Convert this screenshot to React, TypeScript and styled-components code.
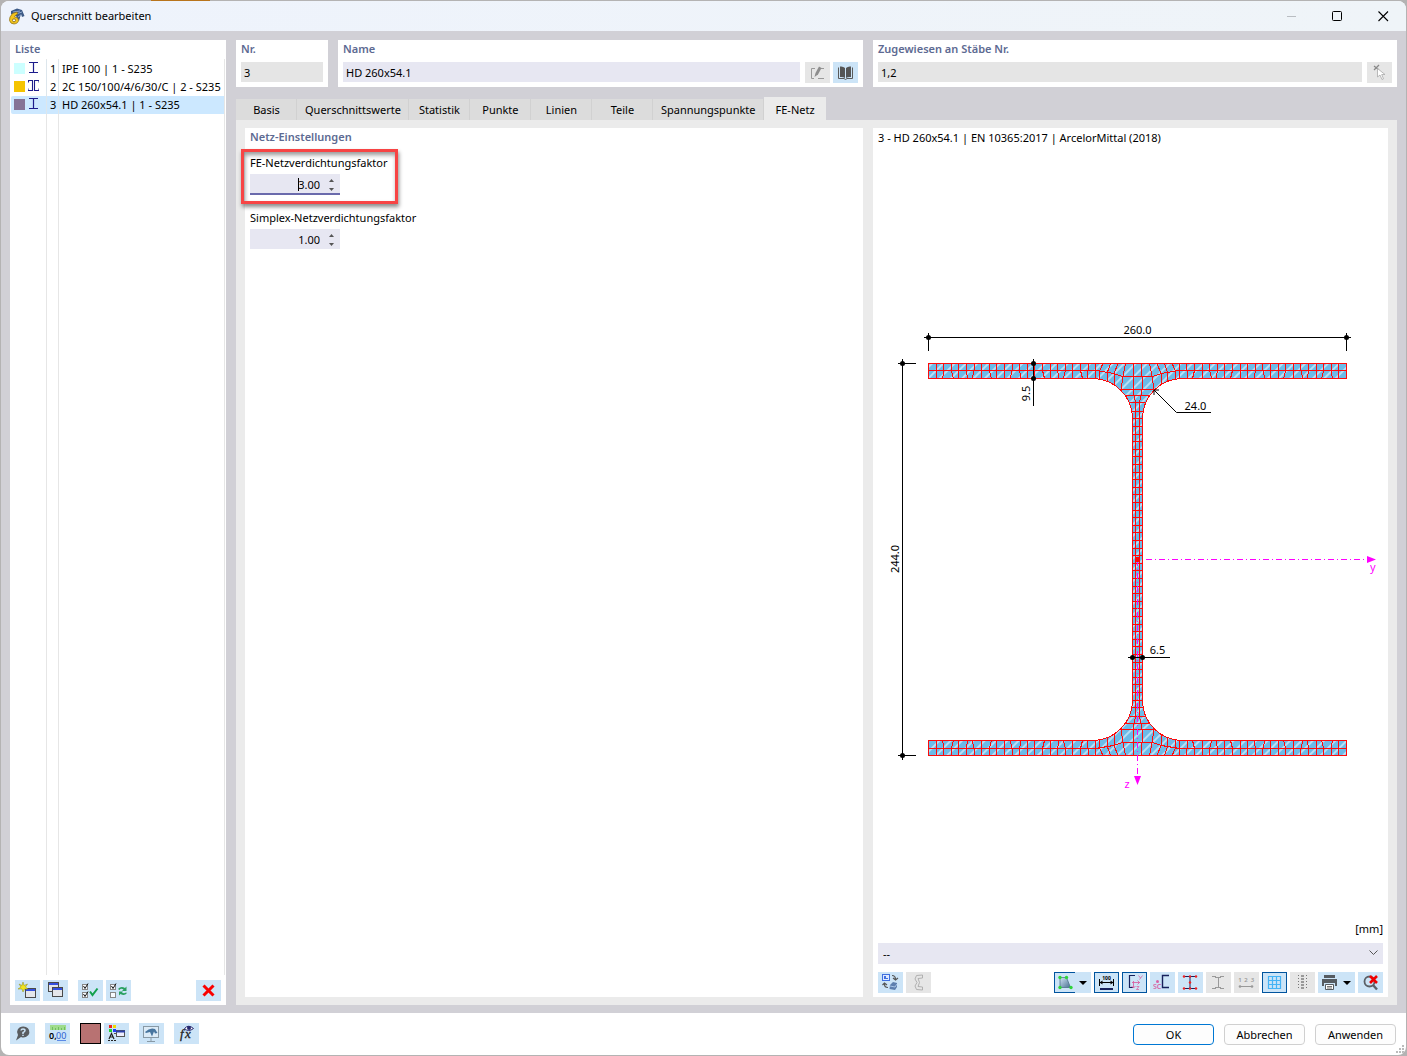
import React, { useState } from "react";
import styled, { createGlobalStyle, css } from "styled-components";

const color = {
  body: "#d1d0d6",
  page: "#ebebeb",
  field: "#e7e7f2",
  readOnly: "#e5e5e5",
  button: "#cce4f7",
  heading: "#5d6a92",
  accent: "#00549e",
  navy: "#17215c",
};

const GlobalStyle = createGlobalStyle`
  * { box-sizing: border-box; }
  body {
    margin: 0;
    background: #b4b3b3;
    font: 11px/16px "Noto Sans", "Open Sans", sans-serif;
    color: #000;
  }
  button, input, select { font: inherit; color: inherit; margin: 0; border-radius: 0; }
  h2 { margin: 0; font-size: 11px; line-height: 16px; font-weight: 600; color: ${color.heading}; }
  svg { display: block; }
`;

const Desktop = styled.div`
  min-height: 100vh;
  padding: 1px;
  display: flex;
  background: linear-gradient(90deg, transparent 151px, #b8741c 151px, #b8741c 210px, transparent 210px) top / 100% 1px no-repeat;
`;
const Dialog = styled.div`
  flex: 1;
  min-width: 0;
  display: flex;
  flex-direction: column;
  border-radius: 8px;
  overflow: hidden;
  background: #fff;
`;
const TitleBar = styled.header`
  height: 30px;
  display: flex;
  align-items: center;
  gap: 6px;
  padding-left: 7px;
  background: linear-gradient(90deg, #eef3fc, #eff4f8);
`;
const WindowButtons = styled.div`
  margin-left: auto;
  display: flex;
`;
const WindowButton = styled.button`
  width: 46px;
  height: 28px;
  padding: 0;
  border: 0;
  background: none;
  display: grid;
  place-items: center;
  color: ${(p) => (p.disabled ? "#b9bdc2" : "#000")};
`;
const Body = styled.main`
  flex: 1;
  display: flex;
  gap: 10px;
  padding: 9px 9px 8px;
  background: ${color.body};
`;
const Panel = styled.section`
  min-width: 0;
  background: #fff;
`;

/* ---- section list ---- */
const ListPanel = styled(Panel)`
  width: 216px;
  flex: none;
  display: flex;
  flex-direction: column;
  padding: 1px 1px 4px;
  h2 { padding-left: 4px; }
`;
const List = styled.ul`
  flex: 1;
  margin: 2px 0 0;
  padding: 1px 0 0;
  list-style: none;
  border-right: 1px solid #e6e6e6;
  background:
    linear-gradient(#e6e6e6, #e6e6e6) 35px 0 / 1px 100% no-repeat,
    linear-gradient(#e6e6e6, #e6e6e6) 47px 0 / 1px 100% no-repeat;
`;
const ListRow = styled.button<{ $selected?: boolean }>`
  width: 100%;
  height: 18px;
  padding: 0 0 0 3px;
  border: 0;
  border-radius: 2px 0 0 2px;
  display: flex;
  align-items: center;
  text-align: left;
  white-space: nowrap;
  background: ${(p) => (p.$selected ? "#cce8ff" : "transparent")};
  svg { margin-bottom: 2px; }
`;
const Swatch = styled.span<{ $c: string }>`
  width: 11px;
  height: 11px;
  margin: 0 3px 2px 0;
  background: ${(p) => p.$c};
`;
const RowNumber = styled.span`
  width: 13px;
  margin: 0 3px 0 7px;
  height: 18px;
  line-height: 18px;
  padding-left: 3px;
  border-left: 1px solid #dde6ec;
  border-right: 1px solid #dde6ec;
`;
const ListTools = styled.div`
  display: flex;
  gap: 3px;
  padding: 5px 4px 0;
`;

/* ---- shared buttons ---- */
const Tool = styled.button<{ $wide?: boolean; $gapBefore?: boolean; $push?: boolean }>`
  flex: none;
  width: ${(p) => (p.$wide ? 37 : 25)}px;
  height: 21px;
  padding: 0;
  border: 0;
  display: flex;
  align-items: center;
  justify-content: ${(p) => (p.$wide ? "flex-start" : "center")};
  background: ${(p) => (p.disabled ? "#e6e6e6" : color.button)};
  ${(p) => p.$gapBefore && "margin-left: 7px;"}
  ${(p) => p.$push && "margin-left: auto;"}
  ${(p) => p["aria-pressed"] && !p.$wide && css`box-shadow: inset 0 0 0 1px ${color.accent};`}
`;
const SplitPart = styled.span<{ $on?: boolean }>`
  width: 21px;
  height: 21px;
  display: grid;
  place-items: center;
  border: 1px solid ${(p) => (p.$on ? color.accent : "transparent")};
  border-right: 0;
`;
const Caret = styled.span`
  margin-left: 4px;
  border: 4px solid transparent;
  border-top: 4px solid #000;
  border-bottom: 0;
`;

/* ---- right-hand area ---- */
const Main = styled.div`
  flex: 1;
  min-width: 0;
  display: flex;
  flex-direction: column;
`;
const HeaderGrid = styled.div`
  display: grid;
  grid-template-columns: 92px minmax(0, 525fr) minmax(0, 524fr);
  gap: 10px;
  margin-bottom: 10px;
`;
const HeaderPanel = styled(Panel)`
  height: 47px;
  padding: 1px 5px 4px;
`;
const FieldRow = styled.div`
  display: flex;
  gap: 5px;
  margin-top: 5px;
`;
const TextBox = styled.input`
  flex: 1;
  min-width: 0;
  height: 20px;
  padding: 0 3px;
  border: 0;
  outline: 0;
  background: ${(p) => (p.readOnly ? color.readOnly : color.field)};
`;
const PairedTool = styled(Tool)`
  & + & { margin-left: -2px; }
`;
const Tabs = styled.div`
  display: flex;
  align-items: flex-end;
  height: 23px;
`;
const Tab = styled.button`
  min-width: 61px;
  height: 21px;
  padding: 0 7px 0 8px;
  border: 0;
  border-right: 1px solid #d1d1d1;
  background: #dcdcdc;
  white-space: nowrap;
  &[aria-selected="true"] {
    height: 23px;
    border-right: 0;
    padding: 3px 11px 0 12px;
    background: ${color.page};
  }
`;
const TabPage = styled.div`
  flex: 1;
  display: grid;
  grid-template-columns: minmax(0, 618fr) minmax(0, 515fr);
  gap: 10px;
  padding: 8px 9px;
  background: ${color.page};
`;
const SettingsPanel = styled(Panel)`
  padding: 1px 5px;
`;
const Setting = styled.div`
  position: relative;
  height: 55px;
  padding-top: 10px;
  label { display: block; line-height: 16px; }
`;
const SpinBox = styled.div<{ $focused?: boolean }>`
  position: relative;
  display: flex;
  width: 90px;
  height: 21px;
  margin-top: 3px;
  background: ${color.field};
  box-shadow: inset 0 ${(p) => (p.$focused ? "-2px #6a6aac" : "-1px #fff")};
  input {
    width: 72px;
    padding: 0 2px 0 0;
    border: 0;
    outline: 0;
    background: none;
    text-align: right;
  }
`;
const TextCursor = styled.span`
  position: absolute;
  left: 48px;
  top: 4px;
  width: 1px;
  height: 13px;
  background: #000;
`;
const Steppers = styled.div`
  width: 18px;
  display: flex;
  flex-direction: column;
  align-items: center;
  justify-content: center;
  gap: 1px;
  button {
    width: 12px;
    height: 8px;
    padding: 0;
    border: 0;
    background: none;
    display: grid;
    place-items: center;
  }
`;
const Highlight = styled.div`
  position: absolute;
  left: -9px;
  top: 4px;
  width: 157px;
  height: 55px;
  border: 3px solid #f74444;
  box-shadow: 1px 3px 4px rgba(0, 0, 0, 0.45), inset 1px 3px 4px rgba(0, 0, 0, 0.4);
  pointer-events: none;
`;
const PreviewPanel = styled(Panel)`
  display: flex;
  flex-direction: column;
  padding: 2px 5px 4px;
`;
const Drawing = styled.div`
  flex: 1;
  min-height: 300px;
  svg { width: 100%; height: 100%; }
`;
const Unit = styled.div`
  text-align: right;
`;
const SelectWrap = styled.div`
  position: relative;
  margin: 6px 0 8px;
  select {
    display: block;
    width: 100%;
    height: 21px;
    padding: 0 20px 0 5px;
    border: 0;
    appearance: none;
    background: ${color.field};
  }
  svg {
    position: absolute;
    right: 5px;
    top: 5px;
    pointer-events: none;
  }
`;
const ToolRow = styled.div`
  display: flex;
  gap: 3px;
`;

/* ---- footer ---- */
const Footer = styled.footer`
  position: relative;
  height: 42px;
  display: flex;
  align-items: flex-start;
  gap: 10px;
  padding: 10px 10px 0 9px;
`;
const ColorButton = styled.button`
  width: 21px;
  height: 21px;
  margin-right: -7px;
  padding: 0;
  border: 1px solid #000;
  background: #b87272;
`;
const DialogButton = styled.button<{ $primary?: boolean }>`
  width: 81px;
  height: 21px;
  margin-top: 1px;
  padding: 0;
  border: 1px solid ${(p) => (p.$primary ? "#0078d4" : "#d0d0d0")};
  border-radius: 4px;
  background: #fdfdfd;
  ${(p) => p.$primary && "margin-left: auto;"}
`;
const Grip = styled.svg`
  position: absolute;
  right: 1px;
  bottom: 1px;
`;

/* ---- icons ---- */
type IconProps = { w?: number; h?: number; children: React.ReactNode };
const Icon = ({ w = 19, h = 17, children }: IconProps) => (
  <svg width={w} height={h} viewBox={`0 0 ${w} ${h}`} fill="none" aria-hidden="true">
    {children}
  </svg>
);

const AppIcon = () => (
  <Icon w={17} h={17}>
    <path d="M3 3 L9 0.500 L14 2 L16.500 8 L14 9 L13 6 L11 13 L8 8 L3 6Z" fill="#3c5a86" />
    <path d="M5 4 L12 3 M8 6 L14 4 M10 9 L13 7" stroke="#8fa9cc" />
    <path d="M9 4 L4.500 5.500 Q1 9 1.500 12.500 Q2.500 16 6 16 Q10.500 15.500 10.500 12 Q10 9 6.500 9 Q7 7 9.500 6Z" fill="#f3c51c" stroke="#8a6c16" strokeWidth=".7" />
    <circle cx="6" cy="12.300" r="1.500" fill="#fff" stroke="#7b6112" strokeWidth=".8" />
  </Icon>
);
const IShape = () => (
  <Icon w={11} h={12}>
    <path d="M1 0.500 H10 M1 10.500 H10 M5.500 0.500 V10.500" stroke="#1c1c8c" strokeWidth="1.200" />
  </Icon>
);
const DoubleC = () => (
  <Icon w={11} h={12}>
    <path d="M0 0.500 H4.500 V10.500 H0 V8.500 M0.500 0.500 V2.500 M11 2.500 V0.500 H6.500 V10.500 H11 V8.500" stroke="#1c1c8c" strokeWidth="1.100" />
  </Icon>
);
const windowShape = (x: number, y: number) => (
  <g key={`${x}${y}`}>
    <rect x={x + 0.5} y={y + 0.5} width="10" height="9" fill="#e4e6ea" stroke="#4a4a4a" />
    <path d={`M${x + 1} ${y + 2} h9`} stroke="#3450e0" strokeWidth="2" />
    <path d={`M${x} ${y + 0.5} h11`} stroke="#4a4a4a" />
  </g>
);
const NewIcon = () => (
  <Icon>
    {windowShape(7, 6)}
    <path d="M5 0 L6 3.500 L9.500 2 L7.500 5 L10 7 L6.500 7 L5 10 L4 7 L0 7 L3 5 L1 2 L4 3.500Z" fill="#f2e31c" stroke="#8b8a1a" strokeWidth=".5" />
  </Icon>
);
const CopyIcon = () => <Icon>{windowShape(2, 0)}{windowShape(6, 5)}</Icon>;
const checkBox = (y: number, on: boolean) => (
  <>
    <rect x="1.500" y={y + 0.5} width="5" height="5" stroke="#888" fill="#f8fbff" />
    {on && <path d={`M2.500 ${y + 2} l1.500 2.500 l3 -5`} stroke="#111" />}
  </>
);
const CheckAll = () => (
  <Icon>
    {checkBox(2, true)}{checkBox(10, true)}
    <path d="M9 9.500 L11.500 13 L16.500 6.500" stroke="#12a04c" strokeWidth="2" />
  </Icon>
);
const CheckSwap = () => (
  <Icon>
    {checkBox(2, true)}{checkBox(10, false)}
    <path d="M9 7 Q12 3.500 16 6 L17.500 4.500 V9 H13 L14.500 7.500 Q12 6 10.500 8Z M18 11 Q15.500 14.500 11.500 12 L10 13.500 V9.500 H14 L13 10.500 Q15 12 17 10.500Z" fill="#2ba060" />
  </Icon>
);
const Cross = () => (
  <Icon w={13} h={13}>
    <path d="M1.500 1.500 L11.500 11.500 M11.500 1.500 L1.500 11.500" stroke="#fa0000" strokeWidth="3" />
  </Icon>
);
const EditIcon = () => (
  <Icon w={15} h={15}>
    <path d="M5 3.500 H1.500 V13.500 H4 M8 13.500 H14 M11 3.500 H14" stroke="#999" />
    <path d="M4.500 12 L5.500 8 L9 1.500 L11.500 3 L8 9.500Z" fill="#8d8d8d" />
  </Icon>
);
const BookIcon = () => (
  <Icon w={15} h={14}>
    <path d="M0.500 1.500 V12.500 H6 L7.500 13.500 L9 12.500 H14.500 V1.500" stroke="#5a5a5a" />
    <path d="M2 0.500 Q5 0 7 2 V12 Q5 10.500 2 11Z M13 0.500 Q10 0 8 2 V12 Q10 10.500 13 11Z" fill="#555" />
  </Icon>
);
const PickIcon = () => (
  <Icon w={15} h={17}>
    <path d="M2 2 L7 6 M7 1 L2 6" stroke="#888" strokeWidth="1.200" />
    <path d="M5.500 4.500 V13 L8 11 L10 15.500 L11.500 14.800 L9.700 10.500 H13Z" fill="#fff" stroke="#aaa" strokeWidth=".8" />
  </Icon>
);
const HelpIcon = () => (
  <Icon w={17} h={17}>
    <path d="M9 1.500 A6 5.500 0 1 1 7 12 L2 15.500 L4 10 A6 5.500 0 0 1 9 1.500Z" fill="#5a5d60" />
    <path d="M7 5.500 Q7.200 4 9 4 Q11 4 11 5.500 Q11 6.800 9 7.500 V9 M9 9.800 V11" stroke="#cce4f7" strokeWidth="1.500" />
  </Icon>
);
const UnitsIcon = () => (
  <svg width="19" height="17" viewBox="0 0 19 17" aria-hidden="true">
    <rect x="2" y="0" width="16" height="5" fill="#9fdc8c" />
    <path d="M4.500 2 V5 M7.500 3 V5 M10.500 2 V5 M13.500 3 V5 M16.500 2 V5" stroke="#6fbe60" />
    <text x="1" y="14" fontSize="9" fontWeight="600">0,</text>
    <text x="8" y="14" fontSize="9" fill="#2f5fd0">00</text>
    <path d="M9 15.500 H18" stroke="#5b8ae6" />
  </svg>
);
const DisplayIcon = () => (
  <Icon>
    <rect x="2" y="0" width="3" height="3" fill="#f02020" /><rect x="6" y="0" width="3" height="3" fill="#f1d800" />
    <rect x="2" y="4" width="3" height="3" fill="#1fd030" /><rect x="6" y="4" width="3" height="3" fill="#2440f0" />
    <path d="M2 14 L4.500 8.500 L7 14 M3 12 H6 M1 15.500 H3 M4 15.500 H6 M7 15.500 H9" stroke="#222" strokeWidth="1.200" />
    <path d="M7 8.500 H10" stroke="#555" />
    <rect x="9.500" y="5.500" width="8" height="6" fill="#eef" stroke="#555" /><path d="M9 6.500 H18" stroke="#2b3fa8" strokeWidth="2" />
  </Icon>
);
const MonitorIcon = () => (
  <Icon>
    <rect x="1.500" y="1.500" width="15" height="11" fill="#dcebf7" stroke="#8899a5" />
    <path d="M9 13 V16 M5 16.500 H13" stroke="#8899a5" />
    <path d="M3 7 Q8 2 13 4 L15.500 8 L13 8.500 L12 6.500 L10 11.500 L8 7 L4 8Z" fill="#47759f" />
  </Icon>
);
const FxIcon = () => (
  <svg width="19" height="17" viewBox="0 0 19 17" aria-hidden="true">
    <g fontStyle="italic" fontFamily="Liberation Serif, serif" fill="#222" stroke="#222" strokeWidth=".3" fontSize="13">
      <text x="3" y="13">f</text>
      <text x="8" y="13">x</text>
    </g>
    <path d="M7.500 3.500 Q11.500 -1 16.500 3.500 Q11.500 7.500 7.500 3.500Z" fill="#fff" stroke="#26266e" />
    <circle cx="12" cy="3" r="2" fill="#26266e" />
  </svg>
);
const RotateIcon = () => (
  <Icon>
    <rect x="1.500" y="0.500" width="7" height="6" fill="#dfeaff" stroke="#3f70e0" /><path d="M3 2 V5 H7 V4 H5 V2Z" fill="#3f70e0" />
    <path d="M11 1.500 Q14.500 1.500 14.500 5.500 M12 4 L14.500 6 L17 4 M3.500 9 V10.500 Q3.500 13.500 7 13.500 M1.500 11 L3.500 9 L6 11" stroke="#555" strokeWidth="1.200" />
    <path d="M9 11 L12 8 L16 9 V13 L14 16 L8.500 15Z" fill="#5d7fae" /><path d="M9 12 L14 13 L16 10" stroke="#a8c5e8" />
  </Icon>
);
const ProfileIcon = () => (
  <Icon w={13} h={17}>
    <path d="M10.500 1 L4.500 1.500 L3 5 L5 8.500 L3 12 L4.500 15.500 L10.500 16 M10.500 1 V4 L6 4.500 L7.500 8.500 L6 12.500 L10.500 13 V16" stroke="#aaa" strokeWidth=".9" />
  </Icon>
);
const RenderIcon = () => (
  <Icon w={17} h={17}>
    <defs><linearGradient id="shade" x2="1" y2="1"><stop stopColor="#d3e5f6" /><stop offset="1" stopColor="#487090" /></linearGradient></defs>
    <path d="M3 3.500 H9.500 L13.500 13.500 H3Z" fill="url(#shade)" stroke="#446880" strokeWidth=".7" />
    <g fill="#2fd43a"><circle cx="3" cy="3.500" r="1.700" /><circle cx="9.500" cy="3.500" r="1.700" /><circle cx="3" cy="13.500" r="1.700" /><circle cx="14" cy="13.500" r="1.700" /></g>
  </Icon>
);
const DimIcon = () => (
  <svg width="19" height="17" viewBox="0 0 19 17" aria-hidden="true">
    <text x="9.500" y="6" fontSize="5" fontWeight="700" textAnchor="middle">100</text>
    <path d="M2.500 5 V12 M16.500 5 V12 M2 8.500 H17" stroke="#000" />
    <path d="M2.500 8.500 l3 -2 v4z M16.500 8.500 l-3 -2 v4z" fill="#000" />
    <path d="M3 15 H16" stroke={color.navy} strokeWidth="2" />
  </svg>
);
const AxesIcon = () => (
  <svg width="19" height="17" viewBox="0 0 19 17" fill="none" aria-hidden="true">
    <path d="M10 1.500 H4.500 V13.500 H8" stroke={color.navy} strokeWidth="1.200" />
    <path d="M7 8.500 H15 M8.500 7 V14 M12.500 6.500 L14.500 8.500 L12.500 10.500 M6.500 12 L8.500 14 L10.500 12" stroke="#d862a4" strokeWidth=".9" />
    <path d="M13.500 1.500 l2 2.500 M17.500 1.500 l-3 4 M11.500 12.500 h2.500 l-2.500 3 h2.500" stroke="#d862a4" strokeWidth=".8" />
  </svg>
);
const ShearIcon = () => (
  <svg width="19" height="17" viewBox="0 0 19 17" fill="none" aria-hidden="true">
    <path d="M16 1.500 H9.500 V13.500 H16" stroke={color.navy} strokeWidth="1.400" />
    <circle cx="4.500" cy="7.500" r="1.500" fill="#d862a4" />
    <text x="0" y="15" fontSize="7" fontWeight="600" fill="#d862a4">SC</text>
  </svg>
);
const NodesIcon = ({ dots }: { dots?: boolean }) => (
  <Icon>
    <path
      d={dots ? "M3 2.500 H15 M3 14.500 H15 M9 2.500 V14.500" : "M3 2.500 H7 M11 2.500 H15 M3 14.500 H7 M11 14.500 H15 M6 3.500 H12 M6 13.500 H12 M9.500 4 V13"}
      stroke={dots ? color.navy : "#999"}
    />
    {dots && [[3, 2.5], [9, 2.5], [15, 2.5], [9, 8.5], [3, 14.5], [9, 14.5], [15, 14.5]].map(([x, y]) => (
      <circle key={`${x}-${y}`} cx={x} cy={y} r="1.200" fill="#f02020" />
    ))}
  </Icon>
);
const NumbersIcon = () => (
  <svg width="19" height="17" viewBox="0 0 19 17" aria-hidden="true">
    <g fontSize="6" fontWeight="600" fill="#999" textAnchor="middle"><text x="3" y="8">1</text><text x="9" y="8">2</text><text x="15.500" y="8">3</text></g>
    <path d="M2 12.500 H16" stroke="#999" />
    <g fill="#999"><circle cx="3" cy="12.500" r="1.300" /><circle cx="15" cy="12.500" r="1.300" /></g>
  </svg>
);
const GridIcon = () => (
  <Icon w={15} h={15}>
    <path d="M1.500 1.500 H13.500 V13.500 H1.500Z M5.500 1.500 V13.500 M9.500 1.500 V13.500 M1.500 5.500 H13.500 M1.500 9.500 H13.500" stroke="#45b3f5" strokeWidth="1.200" />
  </Icon>
);
const StackIcon = () => (
  <Icon w={13} h={17}>
    <path d="M2.500 1 V16 M10.500 1 V16" stroke="#777" strokeDasharray="1 2" />
    <path d="M6.500 1 V16" stroke="#999" strokeWidth="3" strokeDasharray="2 1" />
  </Icon>
);
const PrintIcon = () => (
  <Icon w={17}>
    <path d="M3 1 H14 V4 H3Z M1 5 H16 V12 H14 V9 H3 V12 H1Z" fill="#555b61" />
    <path d="M4.500 10.500 H12.500 V15.500 H4.500Z" fill="#fff" stroke="#555b61" /><path d="M6 12.500 H11 M6 14 H11" stroke="#777" />
  </Icon>
);
const ZoomResetIcon = () => (
  <Icon>
    <circle cx="8.500" cy="7.500" r="5" stroke="#5b6066" strokeWidth="1.800" /><path d="M12 11 L16 15.500" stroke="#5b6066" strokeWidth="2.400" />
    <path d="M9 2 L16 9 M16 2 L9 9" stroke="#f00000" strokeWidth="2.600" />
  </Icon>
);

/* ---- cross-section drawing ---- */
const CX = 1137.5;
const CY = 559.5;
const TOP = 363.5;
const HALF_W = 209;
const TF = 15;
const HALF_WEB = 5;
const R = 40;
const STEP = 7.6;

const filletHalfWidth = (dy: number) =>
  HALF_WEB + R - Math.sqrt(Math.max(0, R * R - (TF + R - dy) ** 2));

const outline = (() => {
  const bottom = 2 * CY - TOP;
  const l = CX - HALF_W, r = CX + HALF_W, wl = CX - HALF_WEB, wr = CX + HALF_WEB;
  return [
    `M${l} ${TOP}H${r}V${TOP + TF}H${wr + R}A${R} ${R} 0 0 0 ${wr} ${TOP + TF + R}`,
    `V${bottom - TF - R}A${R} ${R} 0 0 0 ${wr + R} ${bottom - TF}H${r}V${bottom}H${l}`,
    `V${bottom - TF}H${wl - R}A${R} ${R} 0 0 0 ${wl} ${bottom - TF - R}`,
    `V${TOP + TF + R}A${R} ${R} 0 0 0 ${wl - R} ${TOP + TF}H${l}Z`,
  ].join("");
})();

const slants = [0, 1, -2, 0, 2, -1, 0, -2, 1, 0, -1, 2];

/* Mesh lines of one quarter: distances from the vertical axis and the outer flange edge. */
const quarterMesh: number[][][] = [
  [[4, 0], [4.5, 13], [4.5, 26], [2, 39], [2, 196]],
  [[12, 0], [14.5, 13], [16.5, 25.5]],
  [[19.5, 0], [23.5, 10], [23.5, 21]],
  [[27, 0], [30, 8.5], [30, 17.5]],
  [[34.6, 0], [38, 7.5], [37.5, 15.5]],
  [[0, 13], [15, 13], [24, 10], [42, 7], [209, 7]],
  ...[26.2, 32.3, 39.2].map((dy) => [[0, dy], [filletHalfWidth(dy), dy]]),
  ...Array.from({ length: 20 }, (_, k) => {
    const dy = CY - TOP - 3.8 - STEP * k;
    return [[0, dy], [filletHalfWidth(Math.min(dy, TF + R)), dy]];
  }),
  ...Array.from({ length: 22 }, (_, k) => {
    const x = 41.8 + STEP * k;
    const s = slants[k % slants.length];
    return [[x, 0], [x, 7], [x + s, TF]];
  }),
];

const meshPath = [-1, 1]
  .flatMap((sx) =>
    [-1, 1].flatMap((sy) =>
      quarterMesh.map((line) =>
        "M" + line.map(([dx, dy]) => `${(CX + sx * dx).toFixed(1)} ${(sy < 0 ? TOP + dy : 2 * CY - TOP - dy).toFixed(1)}`).join("L"),
      ),
    ),
  )
  .join("");

const dimensionDots = [
  [928.5, 337.5], [1346.5, 337.5], [902.5, 363.5], [902.5, 755.5],
  [1033.5, 363.5], [1033.5, 378.5], [1132.5, 657.5], [1142.5, 657.5],
];

const SectionDrawing = () => (
  <svg viewBox="878 146 505 775" fill="none" role="img" aria-label="HD 260x54.1" fontSize="11">
    <defs>
      <pattern id="hatch" width="8" height="8" patternUnits="userSpaceOnUse" patternTransform="rotate(45)">
        <rect width="8" height="8" fill="#6bbbe8" />
        <path d="M4 0 V8" stroke="#eaf6fd" strokeWidth="1.200" />
      </pattern>
    </defs>
    <path d={outline} fill="url(#hatch)" />
    <g stroke="#ff0a0a" shapeRendering="crispEdges">
      <path d={meshPath} />
      <path d={outline} />
    </g>
    <g stroke="#ff00ff" strokeDasharray="6 3 1 3" shapeRendering="crispEdges">
      <path d="M1146 559.500 H1367" />
      <path d="M1137.500 560 V776" />
    </g>
    <g fill="#ff00ff">
      <path d="M1367 556 L1376 559.500 L1367 563Z M1134 776 H1141 L1137.500 785Z" />
      <text x="1370" y="571">y</text>
      <text x="1124.500" y="788">z</text>
    </g>
    <rect x="1135" y="557" width="5" height="5" fill="#ff0a0a" />
    <g stroke="#000">
      <path d="M924 337.500 H1351 M928.500 333 V351 M1346.500 333 V351" />
      <path d="M902.500 359 V760 M898 363.500 H916 M898 755.500 H916" />
      <path d="M1033.500 359 V406 M1128 657.500 H1170" />
      <path d="M1154 390 L1176.500 412.500 H1211 M1154 395 V390 H1159" />
    </g>
    <g fill="#000">
      {dimensionDots.map(([x, y]) => <circle key={`${x}-${y}`} cx={x} cy={y} r="2.500" />)}
      <g textAnchor="middle">
        <text x="1137.500" y="334">260.0</text>
        <text x="1195.500" y="410">24.0</text>
        <text x="1157.500" y="654">6.5</text>
        <text transform="translate(899 559) rotate(-90)">244.0</text>
        <text transform="translate(1030 393.500) rotate(-90)">9.5</text>
      </g>
    </g>
  </svg>
);

/* ---- page ---- */
const sections = [
  { nr: 1, name: "IPE 100 | 1 - S235", swatch: "#ccffff", icon: <IShape /> },
  { nr: 2, name: "2C 150/100/4/6/30/C | 2 - S235", swatch: "#f5c400", icon: <DoubleC /> },
  { nr: 3, name: "HD 260x54.1 | 1 - S235", swatch: "#857396", icon: <IShape /> },
];
const tabs = ["Basis", "Querschnittswerte", "Statistik", "Punkte", "Linien", "Teile", "Spannungspunkte", "FE-Netz"];

type SpinFieldProps = { id: string; label: string; initial: number; focused?: boolean };
const SpinField = ({ id, label, initial, focused }: SpinFieldProps) => {
  const [value, setValue] = useState(initial.toFixed(2));
  const step = (d: number) => setValue((v) => (Number(v) + d).toFixed(2));
  return (
    <Setting>
      <label htmlFor={id}>{label}</label>
      <SpinBox $focused={focused}>
        <input id={id} value={value} onChange={(e) => setValue(e.target.value)} />
        {focused && <TextCursor />}
        <Steppers>
          <button aria-label={`${label} erhöhen`} onClick={() => step(1)}>
            <Icon w={5} h={3}><path d="M2.500 0 L5 3 H0Z" fill="#555" /></Icon>
          </button>
          <button aria-label={`${label} verringern`} onClick={() => step(-1)}>
            <Icon w={5} h={3}><path d="M0 0 H5 L2.500 3Z" fill="#555" /></Icon>
          </button>
        </Steppers>
      </SpinBox>
      {focused && <Highlight />}
    </Setting>
  );
};

export default function App() {
  const [selected, setSelected] = useState(3);
  const [tab, setTab] = useState("FE-Netz");
  return (
    <Desktop>
      <GlobalStyle />
      <Dialog role="dialog" aria-label="Querschnitt bearbeiten">
        <TitleBar>
          <AppIcon />
          <span>Querschnitt bearbeiten</span>
          <WindowButtons>
            <WindowButton disabled aria-label="Minimieren"><Icon w={11} h={11}><path d="M1 5.500 H10" stroke="currentColor" /></Icon></WindowButton>
            <WindowButton aria-label="Maximieren"><Icon w={11} h={11}><rect x="0.500" y="0.500" width="9" height="9" rx="1" stroke="currentColor" /></Icon></WindowButton>
            <WindowButton aria-label="Schließen"><Icon w={11} h={11}><path d="M0.500 0.500 L10 10 M10 0.500 L0.500 10" stroke="currentColor" strokeWidth="1.100" /></Icon></WindowButton>
          </WindowButtons>
        </TitleBar>

        <Body>
          <ListPanel>
            <h2>Liste</h2>
            <List>
              {sections.map((s) => (
                <li key={s.nr}>
                  <ListRow $selected={s.nr === selected} onClick={() => setSelected(s.nr)}>
                    <Swatch $c={s.swatch} />
                    {s.icon}
                    <RowNumber>{s.nr}</RowNumber>
                    {s.name}
                  </ListRow>
                </li>
              ))}
            </List>
            <ListTools>
              <Tool aria-label="Neu"><NewIcon /></Tool>
              <Tool aria-label="Kopieren"><CopyIcon /></Tool>
              <Tool $gapBefore aria-label="Alle auswählen"><CheckAll /></Tool>
              <Tool aria-label="Auswahl umkehren"><CheckSwap /></Tool>
              <Tool $push aria-label="Löschen"><Cross /></Tool>
            </ListTools>
          </ListPanel>

          <Main>
            <HeaderGrid>
              <HeaderPanel>
                <h2><label htmlFor="nr">Nr.</label></h2>
                <FieldRow><TextBox id="nr" readOnly value="3" /></FieldRow>
              </HeaderPanel>
              <HeaderPanel>
                <h2><label htmlFor="name">Name</label></h2>
                <FieldRow>
                  <TextBox id="name" defaultValue="HD 260x54.1" />
                  <PairedTool disabled aria-label="Bearbeiten"><EditIcon /></PairedTool>
                  <PairedTool aria-label="Bibliothek"><BookIcon /></PairedTool>
                </FieldRow>
              </HeaderPanel>
              <HeaderPanel>
                <h2><label htmlFor="members">Zugewiesen an Stäbe Nr.</label></h2>
                <FieldRow>
                  <TextBox id="members" readOnly value="1,2" />
                  <Tool disabled aria-label="Auswählen"><PickIcon /></Tool>
                </FieldRow>
              </HeaderPanel>
            </HeaderGrid>

            <Tabs role="tablist">
              {tabs.map((t) => (
                <Tab key={t} role="tab" aria-selected={t === tab} onClick={() => setTab(t)}>{t}</Tab>
              ))}
            </Tabs>

            <TabPage role="tabpanel">
              <SettingsPanel>
                <h2>Netz-Einstellungen</h2>
                <SpinField id="fe" label="FE-Netzverdichtungsfaktor" initial={3} focused />
                <SpinField id="simplex" label="Simplex-Netzverdichtungsfaktor" initial={1} />
              </SettingsPanel>
              <PreviewPanel>
                <div>3 - HD 260x54.1 | EN 10365:2017 | ArcelorMittal (2018)</div>
                <Drawing><SectionDrawing /></Drawing>
                <Unit>[mm]</Unit>
                <SelectWrap>
                  <select aria-label="Ergebnis"><option>--</option></select>
                  <svg width="9" height="9" viewBox="0 0 9 9" fill="none"><path d="M0.500 2.500 L4.500 6.500 L8.500 2.500" stroke="#555" /></svg>
                </SelectWrap>
                <ToolRow>
                  <Tool aria-label="Ansicht drehen"><RotateIcon /></Tool>
                  <Tool disabled aria-label="Profil"><ProfileIcon /></Tool>
                  <Tool $wide $push aria-label="Darstellung"><SplitPart $on><RenderIcon /></SplitPart><Caret /></Tool>
                  <Tool aria-pressed aria-label="Bemaßung"><DimIcon /></Tool>
                  <Tool aria-pressed aria-label="Achsen"><AxesIcon /></Tool>
                  <Tool aria-label="Schubmittelpunkt"><ShearIcon /></Tool>
                  <Tool aria-label="Spannungspunkte"><NodesIcon dots /></Tool>
                  <Tool disabled aria-label="Teile"><NodesIcon /></Tool>
                  <Tool disabled aria-label="Nummerierung"><NumbersIcon /></Tool>
                  <Tool aria-pressed aria-label="FE-Netz anzeigen"><GridIcon /></Tool>
                  <Tool disabled aria-label="Werte"><StackIcon /></Tool>
                  <Tool $wide aria-label="Drucken"><SplitPart><PrintIcon /></SplitPart><Caret /></Tool>
                  <Tool aria-label="Ansicht zurücksetzen"><ZoomResetIcon /></Tool>
                </ToolRow>
              </PreviewPanel>
            </TabPage>
          </Main>
        </Body>

        <Footer>
          <Tool aria-label="Hilfe"><HelpIcon /></Tool>
          <Tool aria-label="Einheiten"><UnitsIcon /></Tool>
          <ColorButton aria-label="Farbe" />
          <Tool aria-label="Anzeige"><DisplayIcon /></Tool>
          <Tool aria-label="Bildschirm"><MonitorIcon /></Tool>
          <Tool aria-label="Formel"><FxIcon /></Tool>
          <DialogButton $primary>OK</DialogButton>
          <DialogButton>Abbrechen</DialogButton>
          <DialogButton>Anwenden</DialogButton>
          <Grip width="9" height="9" fill="#bbb" aria-hidden="true">
            <path d="M6 0h2v2h-2z M3 3h2v2h-2z M6 3h2v2h-2z M0 6h2v2h-2z M3 6h2v2h-2z M6 6h2v2h-2z" />
          </Grip>
        </Footer>
      </Dialog>
    </Desktop>
  );
}
